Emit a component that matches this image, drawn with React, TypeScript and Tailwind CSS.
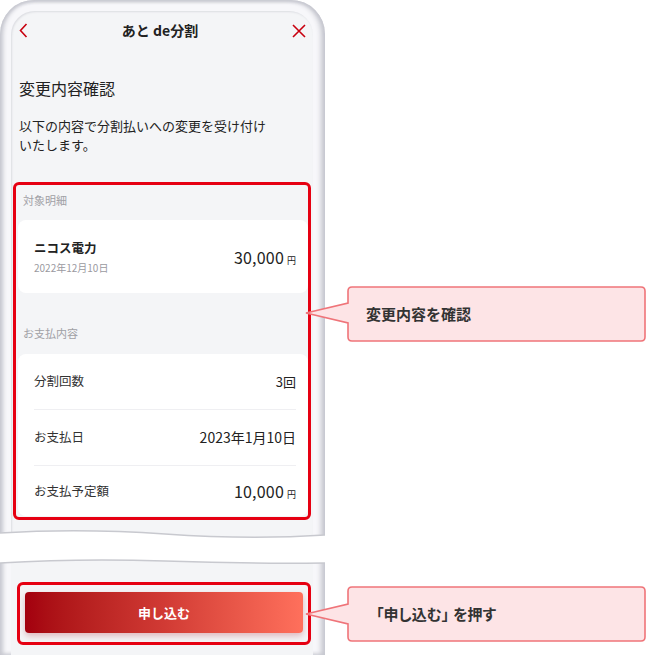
import React from "react";

const jp = { fontFamily: '"Noto Sans CJK JP", "Noto Sans", sans-serif' };

const Callout = ({ top, tipY, children, textLeft, palt }: { top: number; tipY: number; children: React.ReactNode; textLeft: number; palt?: boolean }) => (
    <div className="absolute left-[305px] w-[341px] h-[57px]" style={{ top }}>
        <svg width="341" height="57" className="absolute inset-0">
            <path
                d={`M47 1 H336 Q340 1 340 5 V51 Q340 55 336 55 H47 Q43 55 43 51 V${tipY + 10} L1 ${tipY} L43 ${tipY - 10} V5 Q43 1 47 1 Z`}
                fill="#fde4e6"
                stroke="#ef7479"
                strokeWidth="1.6"
            />
        </svg>
        <div
            className={`absolute top-0 h-[56px] flex items-center text-[15px] font-bold text-[#333] ${palt ? "[font-feature-settings:'palt']" : ""}`}
            style={{ left: textLeft }}
        >
            {children}
        </div>
    </div>
);

const Row = ({ label, children, last }: { label: string; children: React.ReactNode; last?: boolean }) => (
    <div className={`flex items-center justify-between mx-[16px] mr-[12px] ${last ? "h-[50px]" : "h-[56px] border-b border-[#efeff2]"}`}>
        <span className="text-[12.5px] text-[#333]">{label}</span>
        {children}
    </div>
);

const Yen = ({ amount }: { amount: string }) => (
    <span className="flex items-baseline text-[#222]">
        <span className="text-[16px] tracking-[0.2px]">{amount}</span>
        <span className="text-[9px] ml-[3px]">円</span>
    </span>
);

const App = () => {
    return (
        <div className="relative w-[646px] h-[655px] bg-white overflow-hidden" style={jp}>
            <div className="flex flex-col w-[325px]">
                {/* upper phone part */}
                <div className="relative h-[540px] rounded-t-[34px] bg-[#f7f7fa] pt-[11px] pl-[11px] pr-[12px] shadow-[inset_3px_0_4px_#c6c7cf,inset_-4px_0_5px_#c6c7cf,inset_0_2px_3px_#d2d3da]">
                    <div className="relative h-full rounded-t-[24px] bg-[#f4f5f7] shadow-[inset_1px_1px_2px_#dcdde2]">
                        <div className="flex items-center justify-between h-[39px] pl-[8px] pr-[7px]">
                            <svg width="9" height="15" viewBox="0 0 9 15">
                                <path d="M7.5 1 L1.5 7.5 L7.5 14" fill="none" stroke="#c8000f" strokeWidth="1.6" />
                            </svg>
                            <span className="text-[14px] font-bold text-[#222]">あと de分割</span>
                            <svg width="14" height="14" viewBox="0 0 14 14">
                                <path d="M1 1 L13 13 M13 1 L1 13" stroke="#c8000f" strokeWidth="1.6" />
                            </svg>
                        </div>
                        <h1 className="ml-[8px] mt-[26px] text-[16px] leading-[24px] text-[#222]">変更内容確認</h1>
                        <div className="ml-[8px] mt-[16px] text-[13px] text-[#222]">
                            <p className="leading-[19px]">以下の内容で分割払いへの変更を受け付け</p>
                            <p className="leading-[19px]">いたします。</p>
                        </div>
                        <div className="ml-[12px] mt-[38px] text-[11px] leading-[16px] text-[#a0a0a5]">対象明細</div>
                        <div className="ml-[7px] mr-[5px] mt-[12px] h-[73px] rounded-[8px] bg-white flex items-center justify-between pl-[16px] pr-[12px]">
                            <div className="flex flex-col">
                                <span className="text-[12.5px] font-bold leading-[18px] text-[#222]">ニコス電力</span>
                                <span className="mt-[4px] text-[10px] leading-[14px] text-[#9a9a9f]">2022年12月10日</span>
                            </div>
                            <Yen amount="30,000" />
                        </div>
                        <div className="ml-[12px] mt-[32px] text-[11px] leading-[16px] text-[#a0a0a5]">お支払内容</div>
                        <div className="ml-[7px] mr-[5px] mt-[13px] rounded-[8px] bg-white">
                            <Row label="分割回数">
                                <span className="text-[13px] text-[#222]">3回</span>
                            </Row>
                            <Row label="お支払日">
                                <span className="text-[14px] text-[#222]">2023年1月10日</span>
                            </Row>
                            <Row label="お支払予定額" last>
                                <Yen amount="10,000" />
                            </Row>
                        </div>
                        {/* highlight */}
                        <div className="absolute left-[2px] top-[171px] w-[298px] h-[338px] rounded-[6px] border-[3px] border-[#e60012]" />
                    </div>
                    <svg width="325" height="14" className="absolute left-0 bottom-0">
                        <path d="M0 7 Q 80 2 165 8 T 325 9 L325 14 L0 14 Z" fill="white" />
                        <path d="M0 7 Q 80 2 165 8 T 325 9" fill="none" stroke="#c8c9cf" strokeWidth="1.5" />
                    </svg>
                </div>

                {/* lower phone part */}
                <div className="relative mt-[16px] h-[99px] bg-[#f7f7fa] pl-[11px] pr-[12px] shadow-[inset_3px_0_4px_#c6c7cf,inset_-4px_0_5px_#c6c7cf]">
                    <div className="h-full bg-[#f4f5f7] pt-[26px] pl-[6px] pr-[2px]">
                        <div className="h-[63px] rounded-[6px] border-[3px] border-[#e60012] px-[5px] pt-[7px]">
                            <button className="w-full h-[41px] rounded-[4px] bg-gradient-to-r from-[#a3000e] via-[#d13a34] to-[#ff705c] text-white text-[13px] font-bold shadow-[0_3px_6px_rgba(160,0,20,0.25)]">
                                申し込む
                            </button>
                        </div>
                    </div>
                    <svg width="325" height="12" className="absolute left-0 top-0">
                        <path d="M0 7 Q 80 2 165 5 T 325 7 L325 0 L0 0 Z" fill="white" />
                        <path d="M0 7 Q 80 2 165 5 T 325 7" fill="none" stroke="#c8c9cf" strokeWidth="1.5" />
                    </svg>
                </div>
            </div>

            <Callout top={286} tipY={27} textLeft={61}>
                変更内容を確認
            </Callout>
            <Callout top={586} tipY={28} textLeft={71} palt>
                <span>「申し込む」</span>
                <span className="ml-[4px]">を押す</span>
            </Callout>
        </div>
    );
};

export default App;
